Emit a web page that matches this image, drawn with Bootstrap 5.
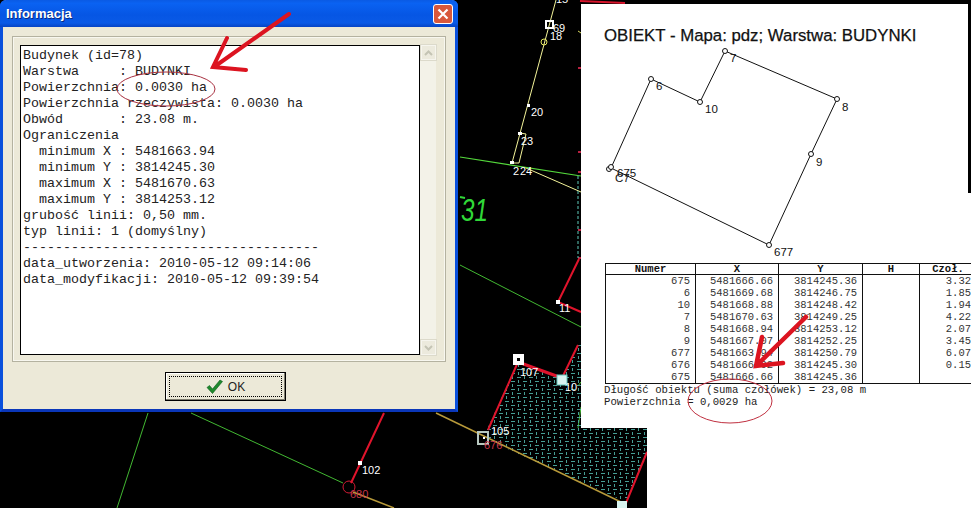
<!DOCTYPE html>
<html lang="pl">
<head>
<meta charset="utf-8">
<title>Informacja</title>
<link href="https://cdn.jsdelivr.net/npm/bootstrap@5.3.0/dist/css/bootstrap.min.css" rel="stylesheet">
<style>
html,body{margin:0;height:100%;background:#000;overflow:hidden}
.desk{position:relative;width:971px;height:508px;overflow:hidden;background:#000}
.layer{position:absolute;left:0;top:0;pointer-events:none}
.cadtxt{font-family:"Liberation Sans",sans-serif;font-size:11px;fill:#fff}
.cadred{font-family:"Liberation Sans",sans-serif;font-size:11px;fill:#c8344a}
.win{position:absolute;left:0;top:0;width:458px;height:412px;background:#ece9d8;border:solid #0a50dc;border-width:0 3px 3px;border-bottom-color:#0a36b8;border-radius:6px 6px 0 0;font-family:"Liberation Sans",sans-serif}
.wintitle{height:27px;margin:0 -3px;padding:0 5px 0 6px;background:linear-gradient(180deg,#0a5ae4 0,#0a62f2 12%,#0656e4 55%,#0a5ae6 85%,#0644c4 100%);color:#fff;font-weight:700;font-size:13px;text-shadow:1px 1px 0 #0a2a80;border-radius:6px 6px 0 0}
.winclose{width:20px;height:20px;background:#d8583c;border:1px solid #fff;border-radius:3px}
.frame{margin:9px 9px 0 9px;height:326px;border:1px solid #b4b2a0;box-shadow:inset 0 0 0 1px #f8f7ef;padding:8px 9px 6px 7px}
.memo{flex:0 0 400px;background:#fff;border:1px solid #000;padding:2px 0 0 2px;margin:0;font-family:"Liberation Mono",monospace;font-size:13.33px;line-height:16px;color:#222;overflow:hidden;white-space:pre}
.sbar{width:17px;background:#f3f2e8;margin-left:0}
.sbtn{width:15px;height:15px;background:#eceadd;border:1px solid #f6f5ee;box-shadow:0 0 0 1px #dcdacb}
.btnrow{margin-top:10px;padding-right:7px}
.okbtn{width:121px;height:29px;background:#ece9d8;border:1px solid #000;border-radius:0;box-shadow:inset -1px -1px 0 #807e70,inset 1px 1px 0 #fff;color:#222;font-size:12px;font-family:"Liberation Sans",sans-serif;padding:3px}
.okin{border:1px dotted #000;height:100%;gap:5px}
.report{position:absolute;left:581px;top:4px;width:390px;height:424px;background:#fff;overflow:hidden;padding:0 0 0 23px}
.rtitle{font-family:"Liberation Sans",sans-serif;font-size:16.8px;line-height:20px;color:#111;margin:22px 0 0;font-weight:400;-webkit-text-stroke:.25px #111}
.shape{display:block;margin-left:-23px;height:217px}
.shape text{font-family:"Liberation Sans",sans-serif;font-size:11.5px;fill:#111}
.ptable{table-layout:fixed;width:371px;margin:0 0 0 1px;border-collapse:collapse;font-family:"Liberation Mono",monospace;font-size:10.5px;color:#333;--bs-table-bg:transparent}
.ptable th,.ptable td{padding:0 5px 0 0;border:0;border-left:1px solid #111;border-right:1px solid #111;line-height:12px;height:12px;text-align:right;white-space:nowrap;color:#333;font-weight:400;overflow:hidden}
.ptable thead th{border-top:1px solid #111;border-bottom:1px solid #111;text-align:center;font-weight:700;color:#111;padding:0;line-height:10px;height:11px}
.ptable tbody tr:last-child td{border-bottom:1px solid #111}
.rfoot{font-family:"Liberation Mono",monospace;font-size:10.67px;line-height:12px;color:#222;margin:0;white-space:pre}
.whitefill{position:absolute;left:647px;top:428px;width:324px;height:80px;background:#fff}
.bstrip{position:absolute;left:968px;top:0;width:3px;height:193px;background:#000}
</style>
</head>
<body>
<div class="desk">
  <svg class="layer" width="971" height="508" viewBox="0 0 971 508" fill="none">
    <defs>
      <pattern id="hatch" width="12" height="8" patternUnits="userSpaceOnUse">
        <path d="M1 1.5h4M7 5.5h4M8.5 0v3M2.5 4v3" stroke="#4fb0a6" stroke-width=".9"/>
      </pattern>
      <linearGradient id="chk" x1="0" y1="0" x2="0" y2="1"><stop offset="0" stop-color="#4cc04c"/><stop offset="1" stop-color="#0e6a22"/></linearGradient>
    </defs>
    <!-- yellow parcel line -->
    <path d="M556 0 512 163h7L526 134 520 133" stroke="#f4f49a"/>
    <path d="M526 168 581 192" stroke="#f4f49a"/>
    <circle cx="544" cy="42" r="3" stroke="#e8e860"/>
    <path d="M578 31l3 2" stroke="#d8d860"/>
    <!-- green -->
    <path d="M460 157 581 176" stroke="#54d83c" stroke-width="1.2"/>
    <path d="M460 265 581 327M191 413 343 483M148 413 117 508" stroke="#42b832"/>
    <path d="M578 428 581 407M578 386l3-4" stroke="#42b832"/>
    <path d="M460 197l5 1" stroke="#30d838" stroke-width="2"/>
    <!-- red stubs -->
    <path d="M580 1 625 3" stroke="#d8142c" stroke-width="2"/>
    <path d="M578 68h3M578 152h3M578 172h3M578 230h3M578 258h3" stroke="#b82040" stroke-width="2"/>
    <path d="M578 176V258" stroke="#5cc8b8" stroke-dasharray="3 2"/>
    <!-- hatched building -->
    <path d="M518 362 562 378 578 345H647V455L626 502 483 438Z" fill="url(#hatch)"/>
    <path d="M518 362 488 430M578 345 562 378M647 452 626 503M558 302 579 259M558 302 581 312M384 413 351 483" stroke="#e0142c" stroke-width="2"/>
    <path d="M518 362 562 378" stroke="#e0142c" stroke-width="3"/>
    <!-- gold -->
    <path d="M436 413 623 503M353 492 394 508" stroke="#b89a3a" stroke-width="1.5"/>
    <circle cx="349" cy="487" r="6" stroke="#d01c34"/>
    <!-- markers -->
    <rect x="513" y="354" width="11" height="11" fill="#fff"/><rect x="517" y="358" width="3" height="3" fill="#000"/>
    <rect x="557" y="375" width="10" height="10" fill="#d8f4f0" stroke="#62c8bc"/>
    <rect x="478" y="432" width="10" height="12" stroke="#b8c8c0" stroke-width="2"/><rect x="483" y="437" width="2" height="2" fill="#fff"/>
    <rect x="617" y="501" width="10" height="7" fill="#d8f4f0"/>
    <rect x="546" y="21" width="7" height="7" stroke="#fff" stroke-width="2"/>
    <rect x="358" y="461" width="4" height="4" fill="#fff"/><rect x="556" y="300" width="4" height="4" fill="#fff"/>
    <rect x="527" y="104" width="3" height="3" fill="#fff"/><rect x="518" y="132" width="4" height="3" fill="#fff"/><rect x="510" y="161" width="4" height="3" fill="#fff"/>
    <!-- labels -->
    <text class="cadtxt" x="556" y="3">15</text>
    <text class="cadtxt" x="553" y="32">69</text><text class="cadtxt" x="550" y="40">18</text>
    <text class="cadtxt" x="531" y="116">20</text><text class="cadtxt" x="521" y="145">23</text>
    <text class="cadtxt" x="513" y="175">2</text><text class="cadtxt" x="520" y="175">24</text>
    <text x="461" y="221" font-family="Liberation Sans,sans-serif" font-style="italic" font-size="32" fill="#30d838" textLength="27" lengthAdjust="spacingAndGlyphs">31</text>
    <text class="cadtxt" x="559" y="312">11</text>
    <text class="cadtxt" x="520" y="376">107</text><text class="cadtxt" x="565" y="391">10</text>
    <text class="cadtxt" x="491" y="435">105</text><text class="cadred" x="484" y="449">676</text>
    <text class="cadtxt" x="362" y="474">102</text><text class="cadred" x="350" y="498">680</text>
  </svg>

  <div class="win d-flex flex-column">
    <div class="wintitle d-flex align-items-center justify-content-between">
      <span>Informacja</span>
      <span class="winclose d-flex align-items-center justify-content-center">
        <svg width="12" height="12" viewBox="0 0 12 12"><path d="M1.5 1.5l9 9M10.5 1.5l-9 9" stroke="#fff" stroke-width="2.2"/></svg>
      </span>
    </div>
    <div class="frame d-flex">
<pre class="memo">Budynek (id=78)
Warstwa     : BUDYNKI
Powierzchnia: 0.0030 ha
Powierzchnia rzeczywista: 0.0030 ha
Obwód       : 23.08 m.
Ograniczenia
  minimum X : 5481663.94
  minimum Y : 3814245.30
  maximum X : 5481670.63
  maximum Y : 3814253.12
grubość linii: 0,50 mm.
typ linii: 1 (domyślny)
-------------------------------------
data_utworzenia: 2010-05-12 09:14:06
data_modyfikacji: 2010-05-12 09:39:54</pre>
      <div class="sbar d-flex flex-column justify-content-between align-items-center py-0">
        <div class="sbtn d-flex align-items-center justify-content-center"><svg width="9" height="6" viewBox="0 0 9 6"><path d="M1 5l3.5-3.5L8 5" stroke="#c4c4b4" stroke-width="2" fill="none"/></svg></div>
        <div class="sbtn d-flex align-items-center justify-content-center"><svg width="9" height="6" viewBox="0 0 9 6"><path d="M1 1l3.5 3.5L8 1" stroke="#c4c4b4" stroke-width="2" fill="none"/></svg></div>
      </div>
    </div>
    <div class="btnrow d-flex justify-content-center">
      <button type="button" class="btn okbtn">
        <span class="okin d-flex align-items-center justify-content-center">
          <svg width="17" height="15" viewBox="0 0 17 15"><path d="M1 8.5 3.5 6.5 6.5 10 14 1l2.5 1.5L6.5 14.5Z" fill="#1f8a2c" stroke="#0c5a1c" stroke-width=".6"/></svg>
          <span>OK</span>
        </span>
      </button>
    </div>
  </div>

  <div class="whitefill"></div>
  <div class="report">
    <h1 class="rtitle">OBIEKT - Mapa: pdz; Warstwa: BUDYNKI</h1>
    <svg class="shape" width="390" height="217" viewBox="581 46 390 217" fill="none">
      <path d="M725 51 837 99 811 154 769 245 611 168 651 79 700 102Z" stroke="#111"/>
      <g fill="#fff" stroke="#111">
        <circle cx="725" cy="51" r="2.5"/><circle cx="837" cy="99" r="2.5"/><circle cx="811" cy="154" r="2.5"/>
        <circle cx="769" cy="245" r="2.5"/><circle cx="651" cy="79" r="2.5"/><circle cx="700" cy="102" r="2.5"/>
        <circle cx="609" cy="169" r="2.5"/><circle cx="611" cy="167" r="2.5"/>
      </g>
      <text x="730" y="62">7</text><text x="705" y="113">10</text><text x="656" y="90">6</text>
      <text x="842" y="111">8</text><text x="816" y="166">9</text><text x="774" y="256">677</text>
      <text x="617" y="177">675</text><text x="615" y="182">C7</text>
    </svg>
    <table class="table ptable">
      <colgroup><col style="width:90px"><col style="width:83px"><col style="width:84px"><col style="width:57px"><col style="width:57px"></colgroup>
      <thead><tr><th>Numer</th><th>X</th><th>Y</th><th>H</th><th>Czoł.</th></tr></thead>
      <tbody>
        <tr><td>675</td><td>5481666.66</td><td>3814245.36</td><td></td><td>3.32</td></tr>
        <tr><td>6</td><td>5481669.68</td><td>3814246.75</td><td></td><td>1.85</td></tr>
        <tr><td>10</td><td>5481668.88</td><td>3814248.42</td><td></td><td>1.94</td></tr>
        <tr><td>7</td><td>5481670.63</td><td>3814249.25</td><td></td><td>4.22</td></tr>
        <tr><td>8</td><td>5481668.94</td><td>3814253.12</td><td></td><td>2.07</td></tr>
        <tr><td>9</td><td>5481667.07</td><td>3814252.25</td><td></td><td>3.45</td></tr>
        <tr><td>677</td><td>5481663.94</td><td>3814250.79</td><td></td><td>6.07</td></tr>
        <tr><td>676</td><td>5481666.02</td><td>3814245.30</td><td></td><td>0.15</td></tr>
        <tr><td>675</td><td>5481666.66</td><td>3814245.36</td><td></td><td></td></tr>
      </tbody>
    </table>
    <p class="rfoot">Długość obiektu (suma czołówek) = 23,08 m
Powierzchnia = 0,0029 ha</p>
  </div>
  <div class="bstrip"></div>

  <svg class="layer" width="971" height="508" viewBox="0 0 971 508" fill="none">
    <path d="M289 14 214 67M227 38 213 67 246 70" stroke="#dc1420" stroke-width="4" stroke-linecap="round"/>
    <ellipse cx="166" cy="89" rx="49" ry="17" stroke="#a83040"/>
    <path d="M806 317 756 366M762 337 756 366 783 363" stroke="#dc1420" stroke-width="4.5" stroke-linecap="round"/>
    <ellipse cx="730" cy="401" rx="42" ry="22" stroke="#c03040"/>
  </svg>
</div>
<script src="https://cdn.jsdelivr.net/npm/bootstrap@5.3.0/dist/js/bootstrap.bundle.min.js"></script>
</body>
</html>
